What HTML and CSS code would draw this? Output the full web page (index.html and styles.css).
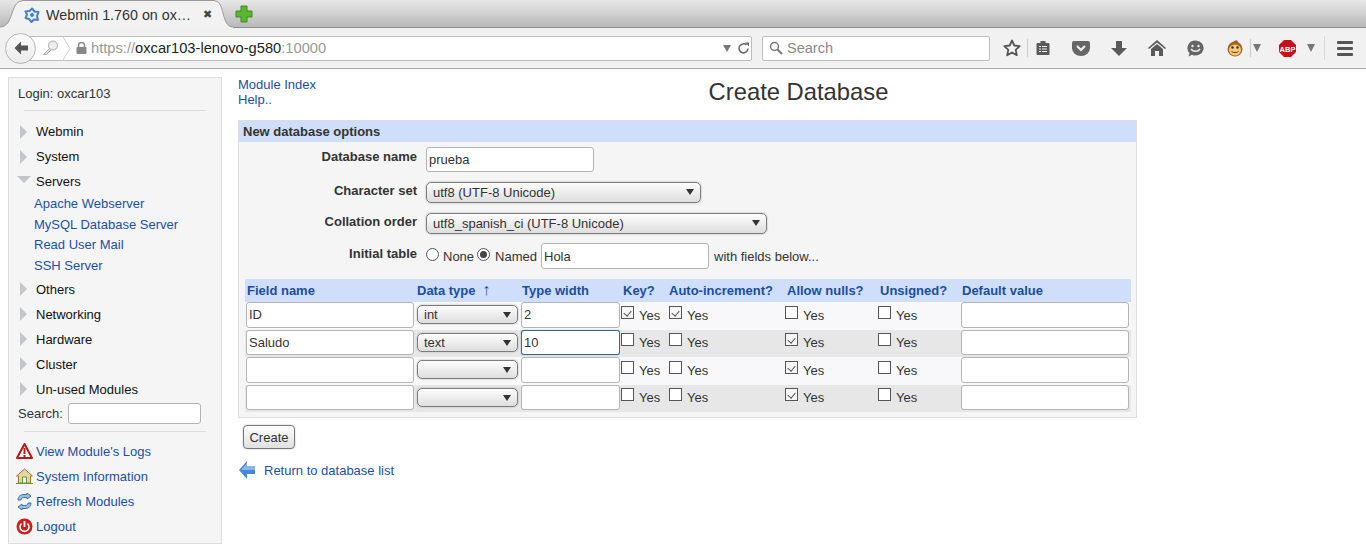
FILE: index.html
```html
<!DOCTYPE html>
<html lang="en">

<head>
    <meta charset="UTF-8">
    <title>Webmin 1.760 on oxcar103-lenovo-g580</title>
    <link rel="stylesheet" href="styles.css">
</head>

<body>
    <!-- browser tabs -->
    <div class="tabstrip">
        <div class="tab">
            <svg class="tab-curve" width="22" height="28" viewBox="0 0 22 28">
                <path d="M0 27C14 27 10 1 22 1V28H0Z" fill="#f2f2f2" />
                <path d="M0 27C14 27 10 1 22 1" fill="none" stroke="#9a9a9a" />
            </svg>
            <div class="tab-body">
                <svg class="tab-logo" width="16" height="16" viewBox="0 0 16 16">
                    <path d="M8 1.500l2.500 3 4 .5-1.500 4 1 4-4-.5-2.500 2.500-2.500-3-3.500-1 1.500-3.500-1.500-3 4-.5z" fill="#e8f0fb" stroke="#4a7fc9" stroke-width="2" stroke-linejoin="round" />
                    <path d="M8 5.500l2.500 2.500-2.500 2.500-2.500-2.500z" fill="#4a7fc9" />
                </svg>
                <span class="tab-title">Webmin 1.760 on ox…</span>
                <span class="tab-close">✖</span>
            </div>
            <svg class="tab-curve" width="18" height="28" viewBox="0 0 18 28">
                <path d="M18 27C6 27 10 1 0 1V28H18Z" fill="#f2f2f2" />
                <path d="M18 27C6 27 10 1 0 1" fill="none" stroke="#9a9a9a" />
            </svg>
        </div>
        <svg class="new-tab" width="18" height="18" viewBox="0 0 18 18">
            <path d="M6 1h6v5h5v6h-5v5H6v-5H1V6h5z" fill="#5cb531" stroke="#3d8a1f" />
        </svg>
    </div>

    <!-- browser toolbar -->
    <div class="navbar">
        <div class="back">
            <svg width="16" height="16" viewBox="0 0 16 16">
                <path d="M8 1.500L1.500 8 8 14.500V10.500H15V5.500H8Z" fill="#555" />
            </svg>
        </div>
        <div class="urlbar">
            <svg class="key" width="17" height="16" viewBox="0 0 17 16">
                <circle cx="11" cy="5.500" r="4.500" fill="#eee" stroke="#aaa" />
                <path d="M7.500 8.500L1.500 14.500H4.500L9 10" fill="#ddd" stroke="#aaa" />
            </svg>
            <svg class="chevron" width="8" height="23" viewBox="0 0 8 23">
                <path d="M0 0L7 11.500 0 23" fill="none" stroke="#ccc" />
            </svg>
            <svg class="lock" width="11" height="12" viewBox="0 0 11 12">
                <path d="M2.500 5V3.500a3 3 0 0 1 6 0V5" fill="none" stroke="#888" stroke-width="1.500" />
                <rect x="0.500" y="5" width="10" height="7" rx="1" fill="#888" />
            </svg>
            <span class="url"><span class="url-dim">https://</span>oxcar103-lenovo-g580<span class="url-dim">:10000</span></span>
            <span class="url-drop"></span>
            <svg class="reload" width="13" height="13" viewBox="0 0 13 13">
                <path d="M11 6.500A4.500 4.500 0 1 1 9.500 3" fill="none" stroke="#666" stroke-width="1.500" />
                <path d="M8 0.500L12 0.500 12 4.500Z" fill="#666" />
            </svg>
        </div>
        <div class="searchbar">
            <svg width="14" height="14" viewBox="0 0 14 14">
                <circle cx="5.500" cy="5.500" r="4" fill="none" stroke="#777" stroke-width="1.500" />
                <path d="M8.500 8.500L13 13" stroke="#777" stroke-width="2" />
            </svg>
            <span>Search</span>
        </div>
        <div class="toolbar">
            <svg class="tool star" width="18" height="18" viewBox="0 0 18 18">
                <path d="M9 1.500l2.300 5 5.400.6-4 3.700 1.100 5.400L9 13.500l-4.800 2.700 1.100-5.400-4-3.700 5.400-.6z" fill="none" stroke="#555" stroke-width="1.800" stroke-linejoin="round" />
            </svg>
            <span class="tool-sep"></span>
            <svg class="tool reader" width="14" height="16" viewBox="0 0 14 16">
                <path d="M1.500 3h3V1h5v2h3a1 1 0 0 1 1 1v10a1 1 0 0 1-1 1h-11a1 1 0 0 1-1-1V4a1 1 0 0 1 1-1z" fill="#5a5a5a" />
                <path d="M3 6h2v1H3zM6 6h5v1H6zM3 8.500h2v1H3zM6 8.500h5v1H6zM3 11h2v1H3zM6 11h5v1H6z" fill="#eee" />
            </svg>
            <svg class="tool pocket" width="18" height="15" viewBox="0 0 18 15">
                <path d="M2 0h14a2 2 0 0 1 2 2v5a9 8 0 0 1-18 0V2a2 2 0 0 1 2-2z" fill="#666" />
                <path d="M5 5l4 4 4-4" fill="none" stroke="#eee" stroke-width="2.200" />
            </svg>
            <svg class="tool down" width="16" height="15" viewBox="0 0 16 15">
                <path d="M5 0h6v7h5l-8 8-8-8h5z" fill="#5a5a5a" />
            </svg>
            <svg class="tool home" width="18" height="16" viewBox="0 0 18 16">
                <path d="M9 0L0 8l1 1 8-6.500L17 9l1-1z" fill="#5a5a5a" />
                <path d="M9 4L3 9v7h4v-5h4v5h4V9z" fill="#5a5a5a" />
            </svg>
            <svg class="tool chat" width="17" height="17" viewBox="0 0 17 17">
                <path d="M8.500 0.500a8 7.500 0 1 1-3.500 14.200L1.500 16.500l1-3.500A8 7.500 0 0 1 8.500 0.500z" fill="#666" />
                <circle cx="5.500" cy="6" r="1.200" fill="#eee" />
                <circle cx="11.500" cy="6" r="1.200" fill="#eee" />
                <path d="M4 9c2 3 7 3 9 0" fill="none" stroke="#eee" stroke-width="1.400" />
            </svg>
            <svg class="tool monkey" width="16" height="17" viewBox="0 0 16 17">
                <path d="M6 3C6 1 9 0 11 1L9 3z" fill="#8a4a1a" />
                <circle cx="8" cy="9" r="7.500" fill="#a8641f" />
                <ellipse cx="8" cy="10" rx="6" ry="5.500" fill="#f2c879" />
                <circle cx="5.500" cy="7.500" r="1.200" fill="#333" />
                <circle cx="10.500" cy="7.500" r="1.200" fill="#333" />
                <path d="M4.500 11.500c2 1.500 5 1.500 7 0" fill="none" stroke="#6b3d10" />
            </svg>
            <span class="tool-sep sep-monkey"></span>
            <span class="drop drop-monkey"></span>
            <svg class="tool abp" width="17" height="17" viewBox="0 0 17 17">
                <path d="M5 0h7l5 5v7l-5 5H5l-5-5V5z" fill="#c8101c" />
                <text x="8.500" y="11.500" class="abp-text">ABP</text>
            </svg>
            <span class="drop drop-abp"></span>
            <span class="tool-sep sep-menu"></span>
            <div class="menu"><span></span><span></span><span></span></div>
        </div>
    </div>

    <div class="page">
        <!-- webmin sidebar -->
        <aside class="sidebar">
            <div class="login">Login: oxcar103</div>
            <hr class="rule rule-top">
            <div class="cat"><span class="arrow"></span>Webmin</div>
            <div class="cat"><span class="arrow"></span>System</div>
            <div class="cat"><span class="arrow-open"></span>Servers</div>
            <div class="subs">
                <a href="#">Apache Webserver</a>
                <a href="#">MySQL Database Server</a>
                <a href="#">Read User Mail</a>
                <a href="#">SSH Server</a>
            </div>
            <div class="cat"><span class="arrow"></span>Others</div>
            <div class="cat"><span class="arrow"></span>Networking</div>
            <div class="cat"><span class="arrow"></span>Hardware</div>
            <div class="cat"><span class="arrow"></span>Cluster</div>
            <div class="cat"><span class="arrow"></span>Un-used Modules</div>
            <div class="side-search">
                <label>Search:</label>
                <input type="text" class="field side-input">
            </div>
            <hr class="rule rule-low">
            <a href="#" class="side-link">
                <svg width="17" height="16" viewBox="0 0 17 16">
                    <path d="M8.500 1L16 15H1z" fill="#fff" stroke="#b81818" stroke-width="2" stroke-linejoin="round" />
                    <path d="M7.500 5h2v6h-2zM7.500 12h2v2h-2z" fill="#b81818" />
                </svg>
                View Module's Logs
            </a>
            <a href="#" class="side-link">
                <svg width="17" height="16" viewBox="0 0 17 16">
                    <path d="M8.500 1L0.500 8h2v7h12V8h2z" fill="#e0d6a8" stroke="#a0762c" />
                    <path d="M6.500 9h4v6h-4z" fill="#fff" stroke="#6a8e3a" />
                    <path d="M0 15h17v1H0z" fill="#5a9a3a" />
                </svg>
                System Information
            </a>
            <a href="#" class="side-link">
                <svg width="17" height="17" viewBox="0 0 17 17">
                    <path d="M2 7C2 3 5 1.500 8 1.500h3V0l4 3-4 3V4.500H8C6 4.500 5 5.500 5 7z" fill="#9cc0e6" stroke="#3a6ea5" />
                    <path d="M15 10c0 4-3 5.500-6 5.500H6V17l-4-3 4-3v1.500h3c2 0 3-1 3-2.500z" fill="#9cc0e6" stroke="#3a6ea5" />
                </svg>
                Refresh Modules
            </a>
            <a href="#" class="side-link">
                <svg width="17" height="17" viewBox="0 0 17 17">
                    <circle cx="8.500" cy="8.500" r="8" fill="#c8201c" />
                    <path d="M5.500 5.500a4.500 4.500 0 1 0 6 0" fill="none" stroke="#fff" stroke-width="1.600" />
                    <path d="M8.500 3v6" stroke="#fff" stroke-width="1.800" />
                </svg>
                Logout
            </a>
        </aside>

        <main class="content">
            <div class="head">
                <div class="head-links">
                    <a href="#">Module Index</a>
                    <a href="#">Help..</a>
                </div>
                <h1>Create Database</h1>
            </div>

            <form class="panel">
                <div class="panel-title">New database options</div>

                <div class="opt opt-name">
                    <label>Database name</label>
                    <input type="text" class="field db-name" value="prueba">
                </div>
                <div class="opt opt-charset">
                    <label>Character set</label>
                    <div class="sel sel-charset">utf8 (UTF-8 Unicode)</div>
                </div>
                <div class="opt opt-collation">
                    <label>Collation order</label>
                    <div class="sel sel-collation">utf8_spanish_ci (UTF-8 Unicode)</div>
                </div>
                <div class="opt opt-initial">
                    <label>Initial table</label>
                    <input type="radio" name="initial" class="radio">
                    <span class="radio-text none">None</span>
                    <input type="radio" name="initial" class="radio radio-on" checked>
                    <span class="radio-text named">Named</span>
                    <input type="text" class="field table-name" value="Hola">
                    <span class="radio-text">with fields below...</span>
                </div>

                <table class="fields">
                    <colgroup>
                        <col class="c-name">
                        <col class="c-type">
                        <col class="c-width">
                        <col class="c-key">
                        <col class="c-auto">
                        <col class="c-null">
                        <col class="c-uns">
                        <col class="c-def">
                    </colgroup>
                    <thead>
                        <tr>
                            <th>Field name</th>
                            <th class="th-tight">Data type <span class="sort">↑</span></th>
                            <th>Type width</th>
                            <th class="th-wide">Key?</th>
                            <th class="th-tight">Auto-increment?</th>
                            <th class="th-wide">Allow nulls?</th>
                            <th class="th-wide">Unsigned?</th>
                            <th>Default value</th>
                        </tr>
                    </thead>
                    <tbody>
                        <tr class="row-a">
                            <td><input type="text" class="field f-name" value="ID"></td>
                            <td><div class="sel sel-type">int</div></td>
                            <td><input type="text" class="field f-width" value="2"></td>
                            <td><input type="checkbox" class="check" checked><span class="yes">Yes</span></td>
                            <td><input type="checkbox" class="check" checked><span class="yes">Yes</span></td>
                            <td><input type="checkbox" class="check"><span class="yes">Yes</span></td>
                            <td><input type="checkbox" class="check"><span class="yes">Yes</span></td>
                            <td><input type="text" class="field f-name"></td>
                        </tr>
                        <tr class="row-b">
                            <td><input type="text" class="field f-name" value="Saludo"></td>
                            <td><div class="sel sel-type">text</div></td>
                            <td><input type="text" class="field f-width focus" value="10"></td>
                            <td><input type="checkbox" class="check"><span class="yes">Yes</span></td>
                            <td><input type="checkbox" class="check"><span class="yes">Yes</span></td>
                            <td><input type="checkbox" class="check" checked><span class="yes">Yes</span></td>
                            <td><input type="checkbox" class="check"><span class="yes">Yes</span></td>
                            <td><input type="text" class="field f-name"></td>
                        </tr>
                        <tr class="row-a">
                            <td><input type="text" class="field f-name"></td>
                            <td><div class="sel sel-type"></div></td>
                            <td><input type="text" class="field f-width"></td>
                            <td><input type="checkbox" class="check"><span class="yes">Yes</span></td>
                            <td><input type="checkbox" class="check"><span class="yes">Yes</span></td>
                            <td><input type="checkbox" class="check" checked><span class="yes">Yes</span></td>
                            <td><input type="checkbox" class="check"><span class="yes">Yes</span></td>
                            <td><input type="text" class="field f-name"></td>
                        </tr>
                        <tr class="row-b">
                            <td><input type="text" class="field f-name"></td>
                            <td><div class="sel sel-type"></div></td>
                            <td><input type="text" class="field f-width"></td>
                            <td><input type="checkbox" class="check"><span class="yes">Yes</span></td>
                            <td><input type="checkbox" class="check"><span class="yes">Yes</span></td>
                            <td><input type="checkbox" class="check" checked><span class="yes">Yes</span></td>
                            <td><input type="checkbox" class="check"><span class="yes">Yes</span></td>
                            <td><input type="text" class="field f-name"></td>
                        </tr>
                    </tbody>
                </table>
            </form>

            <button type="button" class="create">Create</button>

            <a href="#" class="return">
                <svg width="16" height="18" viewBox="0 0 16 18">
                    <path d="M8 0L0 9l8 9v-5h8V5H8z" fill="#4a86d8" />
                    <path d="M8 2L2 9h14V5H8z" fill="#8ab4ec" />
                </svg>
                Return to database list
            </a>
        </main>
    </div>
</body>

</html>
```

FILE: styles.css
```css
* {
    box-sizing: border-box;
}

html,
body {
    height: 550px;
    overflow: hidden;
}

body {
    margin: 0;
    background-color: #fff;
    font-family: "Liberation Sans", Arial, sans-serif;
    font-size: 13px;
    color: #333;
}

a {
    color: #1c4fa6;
    text-decoration: none;
}

/* browser tabs */
.tabstrip {
    display: flex;
    align-items: flex-start;
    height: 28px;
    background: linear-gradient(#e8e8e8, #b9b9b9);
    border-bottom: 1px solid #8c8c8c;
}

.tab {
    display: flex;
    flex: none;
    height: 28px;
}

.tab-curve {
    flex: none;
}

.tab-body {
    display: flex;
    align-items: center;
    width: 193px;
    height: 28px;
    background: #f2f2f2;
    border-top: 1px solid #9a9a9a;
}

.tab-logo {
    flex: none;
    margin-left: 2px;
    margin-right: 6px;
}

.tab-title {
    font-size: 14.300px;
    color: #333;
    white-space: nowrap;
}

.tab-close {
    margin-left: 12px;
    font-size: 11px;
    color: #444;
}

.new-tab {
    margin-top: 5px;
    margin-left: 2px;
}

/* browser toolbar */
.navbar {
    display: flex;
    align-items: center;
    height: 41px;
    padding-left: 5px;
    background: #f1f1f1;
    border-bottom: 1px solid #a9a9a9;
}

.back {
    position: relative;
    z-index: 1;
    display: flex;
    align-items: center;
    justify-content: center;
    flex: none;
    width: 31px;
    height: 31px;
    background: linear-gradient(#fafafa, #ececec);
    border: 1px solid #b5b5b5;
    border-radius: 50%;
}

.urlbar {
    display: flex;
    align-items: center;
    flex: none;
    width: 732px;
    height: 25px;
    margin-left: -16px;
    padding-left: 21px;
    background: #fff;
    border: 1px solid #bdbdbd;
    border-radius: 0 2px 2px 0;
}

.chevron {
    margin-left: 4px;
}

.lock {
    margin-left: 5px;
}

.url {
    margin-left: 4px;
    font-size: 14.700px;
    color: #222;
    white-space: nowrap;
}

.url-dim {
    color: #999;
}

.url-drop {
    width: 0;
    height: 0;
    margin-left: auto;
    border-top: 7px solid #777;
    border-left: 4px solid transparent;
    border-right: 4px solid transparent;
}

.reload {
    margin-left: 6px;
    margin-right: 1px;
}

.searchbar {
    display: flex;
    align-items: center;
    flex: none;
    gap: 4px;
    width: 228px;
    height: 25px;
    margin-left: 10px;
    padding-left: 6px;
    background: #fff;
    border: 1px solid #bdbdbd;
    border-radius: 2px;
    font-size: 14.500px;
    color: #888;
}

.toolbar {
    display: flex;
    align-items: center;
    flex: 1;
    padding-left: 13px;
}

.tool {
    flex: none;
}

.tool-sep {
    flex: none;
    width: 1px;
    height: 18px;
    margin-left: 6px;
    background: #ccc;
}

.reader {
    margin-left: 8px;
}

.pocket {
    margin-left: 22px;
}

.down {
    margin-left: 21px;
}

.home {
    margin-left: 21px;
}

.chat {
    margin-left: 21px;
}

.monkey {
    margin-left: 23px;
}

.sep-monkey {
    margin-left: 7px;
}

.drop {
    flex: none;
    width: 0;
    height: 0;
    border-top: 8px solid #777;
    border-left: 4px solid transparent;
    border-right: 4px solid transparent;
}

.drop-monkey {
    margin-left: 2px;
}

.abp {
    margin-left: 18px;
}

.abp-text {
    font-family: "Liberation Sans", sans-serif;
    font-size: 7.500px;
    font-weight: bold;
    text-anchor: middle;
    fill: #fff;
}

.drop-abp {
    margin-left: 11px;
}

.sep-menu {
    height: 24px;
    margin-left: 9px;
    background: #ddd;
}

.menu {
    display: flex;
    flex-direction: column;
    gap: 3px;
    margin-left: 12px;
}

.menu span {
    display: block;
    width: 16px;
    height: 3px;
    background: #555;
    border-radius: 1px;
}

/* page */
.page {
    display: flex;
    align-items: flex-start;
    padding: 8px 0 0 8px;
}

.sidebar {
    flex: none;
    width: 214px;
    height: 467px;
    padding: 8px 15px 0 9px;
    background: #f5f5f5;
    border: 1px solid #ddd;
}

.login {
    height: 15px;
    line-height: 15px;
    color: #333;
}

.rule {
    height: 1px;
    margin: 9px 0 0 6px;
    border: 0;
    background: #ddd;
}

.rule-top {
    margin-bottom: 8px;
}

.cat {
    display: flex;
    align-items: center;
    height: 25px;
    padding-left: 18px;
    color: #111;
}

.arrow,
.arrow-open {
    flex: none;
    width: 0;
    height: 0;
}

.arrow {
    margin-left: -16px;
    margin-right: 9px;
    border-left: 7px solid #c4c6cc;
    border-top: 7px solid transparent;
    border-bottom: 7px solid transparent;
}

.arrow-open {
    margin-left: -19px;
    margin-right: 5px;
    margin-bottom: 5px;
    border-top: 7px solid #c4c6cc;
    border-left: 7.500px solid transparent;
    border-right: 7.500px solid transparent;
}

.subs {
    display: flex;
    flex-direction: column;
    padding-left: 16px;
}

.subs a {
    height: 20.700px;
    line-height: 20px;
}

.side-search {
    display: flex;
    align-items: center;
    justify-content: space-between;
    margin-top: 1px;
    height: 21px;
    margin-right: 5px;
}

.side-input {
    width: 133px;
    height: 21px;
}

.rule-low {
    margin-top: 7px;
    margin-bottom: 7px;
}

.side-link {
    display: flex;
    align-items: center;
    gap: 3px;
    height: 25px;
    margin-left: -2px;
    white-space: nowrap;
}

.side-link svg {
    flex: none;
}

/* main column */
.content {
    display: flex;
    flex-direction: column;
    align-items: flex-start;
    width: 899px;
    margin-left: 16px;
}

.head {
    display: flex;
    width: 100%;
    height: 43px;
}

.head-links {
    display: flex;
    flex-direction: column;
    line-height: 15px;
    width: 200px;
}

h1 {
    flex: 1;
    margin: 0;
    padding-left: 22px;
    font-size: 23.800px;
    font-weight: normal;
    line-height: 30px;
    text-align: center;
    color: #333;
}

.panel {
    width: 899px;
    height: 298px;
    background: #f5f5f5;
    border: 1px solid #ddd;
}

.panel-title {
    height: 21px;
    padding-left: 4px;
    line-height: 21px;
    font-weight: bold;
    background: #cfdffb;
    color: #333;
}

.opt {
    display: flex;
    align-items: center;
}

.opt label {
    flex: none;
    width: 178px;
    font-weight: bold;
    text-align: right;
}

.opt-name {
    height: 25px;
    margin-top: 5px;
}

.opt-charset {
    height: 21px;
    margin-top: 10px;
}

.opt-collation {
    height: 21px;
    margin-top: 10px;
}

.opt-initial {
    height: 26px;
    margin-top: 9px;
}

.opt-name .field,
.opt-charset .sel,
.opt-collation .sel {
    margin-left: 9px;
}

.opt-name label {
    padding-bottom: 7px;
}

.opt-charset label {
    padding-bottom: 5px;
}

.opt-collation label {
    padding-bottom: 5px;
}

.opt-initial label {
    padding-bottom: 6px;
    margin-right: 9px;
}

.field {
    padding: 0 2px 0 2px;
    font-family: "Liberation Sans", Arial, sans-serif;
    font-size: 13px;
    color: #333;
    background: #fff;
    border: 1px solid #b4b4b4;
    border-radius: 3px;
    outline: none;
}

.focus {
    border-color: #3f648f;
    box-shadow: 0 0 1px #3f648f;
}

.db-name {
    width: 168px;
    height: 25px;
}

.table-name {
    width: 168px;
    height: 26px;
    margin-right: 5px;
}

.sel {
    position: relative;
    display: flex;
    align-items: center;
    flex: none;
    height: 21px;
    padding-left: 6px;
    background: linear-gradient(#fdfdfd, #dedede);
    border: 1px solid #7c7c7c;
    border-radius: 5px;
    box-shadow: 0 0 2px #aaa;
    font-size: 13px;
    color: #333;
}

.sel::after {
    content: "";
    position: absolute;
    top: 6px;
    right: 6px;
    border-top: 6px solid #333;
    border-left: 4px solid transparent;
    border-right: 4px solid transparent;
}

.sel-charset {
    width: 275px;
}

.sel-collation {
    width: 341px;
}

.sel-type {
    width: 101px;
    height: 19px;
    margin-left: 0;
}

.radio {
    appearance: none;
    flex: none;
    position: relative;
    width: 13px;
    height: 13px;
    margin: 0 4px 4px 0;
    background: #fff;
    border: 1px solid #555;
    border-radius: 50%;
}

.radio-on {
    margin-right: 5px;
}

.radio:checked::after {
    content: "";
    position: absolute;
    top: 2px;
    left: 2px;
    width: 7px;
    height: 7px;
    background: #444;
    border-radius: 50%;
}

.radio-text {
    white-space: nowrap;
}

.none {
    margin-right: 3px;
}

.named {
    margin-right: 4px;
}

/* fields table */
.fields {
    width: 886px;
    margin: 10px 0 0 6px;
    border-collapse: collapse;
    table-layout: fixed;
}

.c-name {
    width: 171px;
}

.c-type {
    width: 104px;
}

.c-width {
    width: 100px;
}

.c-key {
    width: 48px;
}

.c-auto {
    width: 116px;
}

.c-null {
    width: 93px;
}

.c-uns {
    width: 83px;
}

.c-def {
    width: 171px;
}

.fields th {
    height: 23px;
    padding: 0 0 0 2px;
    text-align: left;
    font-weight: bold;
    color: #1a4ea0;
    background: #cfdffb;
    white-space: nowrap;
}

.fields .th-tight {
    padding-left: 1px;
}

.fields .th-wide {
    padding-left: 3px;
}

.sort {
    margin-left: 3px;
    font-size: 16px;
    line-height: 13px;
    font-weight: normal;
}

.fields td {
    padding: 0 0 2px 1px;
    white-space: nowrap;
}

.row-a td {
    height: 27.500px;
    background: #f8f8fa;
}

.row-b td {
    height: 27.500px;
    background: #e7e7e7;
}

.f-name {
    display: block;
    width: 168px;
    height: 25px;
}

.f-width {
    display: block;
    width: 99px;
    height: 25px;
}

.row-a .field {
    height: 25.500px;
}

.check {
    appearance: none;
    position: relative;
    display: inline-block;
    width: 13px;
    height: 13px;
    margin: 0 5px 0 0;
    vertical-align: 2px;
    background: #fff;
    border: 1px solid #555;
}

.check:checked {
    background: #f6f6f6;
}

.check:checked::after {
    content: "";
    position: absolute;
    top: 2px;
    left: 3px;
    width: 4px;
    height: 6px;
    border-right: 1px solid #555;
    border-bottom: 1px solid #555;
    transform: rotate(40deg);
}

.yes {
    vertical-align: 1px;
}

.create {
    width: 52px;
    height: 24px;
    margin: 7px 0 0 5px;
    padding: 0;
    font-family: "Liberation Sans", Arial, sans-serif;
    font-size: 13px;
    color: #333;
    background: linear-gradient(#fdfdfd, #e0e0e0);
    border: 1px solid #777;
    border-radius: 4px;
    box-shadow: 0 0 2px #bbb;
}

.return {
    display: flex;
    align-items: center;
    gap: 9px;
    margin: 12px 0 0 1px;
}
```
